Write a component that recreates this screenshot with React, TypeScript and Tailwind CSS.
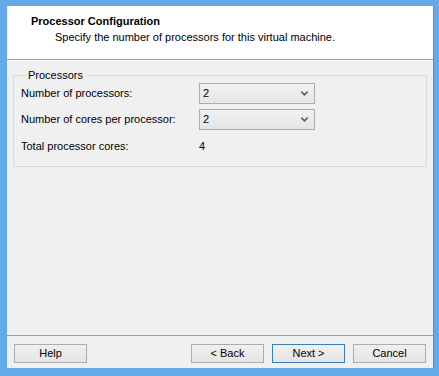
import { ChevronDown } from 'lucide-react';

const font = { fontFamily: '"Liberation Sans", Arial, sans-serif' };

// Windows-style combo box
function Combo({ value }: { value: string }) {
  return (
    <div className="flex h-[21px] w-[116px] items-center justify-between border border-[#acacac] bg-gradient-to-b from-[#f2f2f2] to-[#e5e5e5] pl-[3px] pr-[4px]">
      <span className="text-[11px] text-black">{value}</span>
      <ChevronDown size={11} strokeWidth={3.5} className="text-[#606060]" />
    </div>
  );
}

function Button({ label, focused }: { label: string; focused?: boolean }) {
  return (
    <button
      className={`flex h-[19px] w-[73px] items-center justify-center border bg-gradient-to-b from-[#f0f0f0] to-[#e5e5e5] text-[11px] text-black ${
        focused ? 'border-[#3c7fb1]' : 'border-[#acacac]'
      }`}
    >
      {label}
    </button>
  );
}

export default function App() {
  return (
    <div
      style={font}
      className="flex h-[376px] w-[439px] flex-col bg-[#65aae8] pb-[8px] pl-[7px] pr-[5px] pt-[6px]"
    >
      <div className="flex flex-1 flex-col border-r border-[#4f8fcc] bg-[#f0f0f0]">
        {/* Header */}
        <div className="flex h-[53px] flex-col bg-white pl-[24px] pt-[9px]">
          <div className="text-[11px] font-bold leading-[13px] text-black">Processor Configuration</div>
          <div className="pl-[24px] pt-[3px] text-[11px] leading-[13px] text-black">
            Specify the number of processors for this virtual machine.
          </div>
        </div>
        <div className="h-px bg-[#a0a0a0]" />
        <div className="h-px bg-white" />

        {/* Group box */}
        <fieldset className="mx-[6px] mt-[8px] h-[98px] border border-[#dcdcdc] pl-[7px]">
          <legend className="ml-[4px] px-[3px] text-[11px] leading-[13px] text-black">Processors</legend>
          <div className="flex flex-col gap-[5px] pt-[1px]">
            <div className="flex items-center">
              <span className="w-[178px] text-[11px] text-black">Number of processors:</span>
              <Combo value="2" />
            </div>
            <div className="flex items-center">
              <span className="w-[178px] text-[11px] text-black">Number of cores per processor:</span>
              <Combo value="2" />
            </div>
            <div className="flex items-center pt-[3px]">
              <span className="w-[178px] text-[11px] text-black">Total processor cores:</span>
              <span className="text-[11px] text-black">4</span>
            </div>
          </div>
        </fieldset>

        <div className="flex-1" />

        {/* Footer */}
        <div className="h-px bg-[#a0a0a0]" />
        <div className="flex items-center px-[7px] pb-[5px] pt-[8px]">
          <Button label="Help" />
          <div className="flex-1" />
          <div className="flex gap-[8px]">
            <Button label="< Back" />
            <Button label="Next >" focused />
            <Button label="Cancel" />
          </div>
        </div>
      </div>
    </div>
  );
}
